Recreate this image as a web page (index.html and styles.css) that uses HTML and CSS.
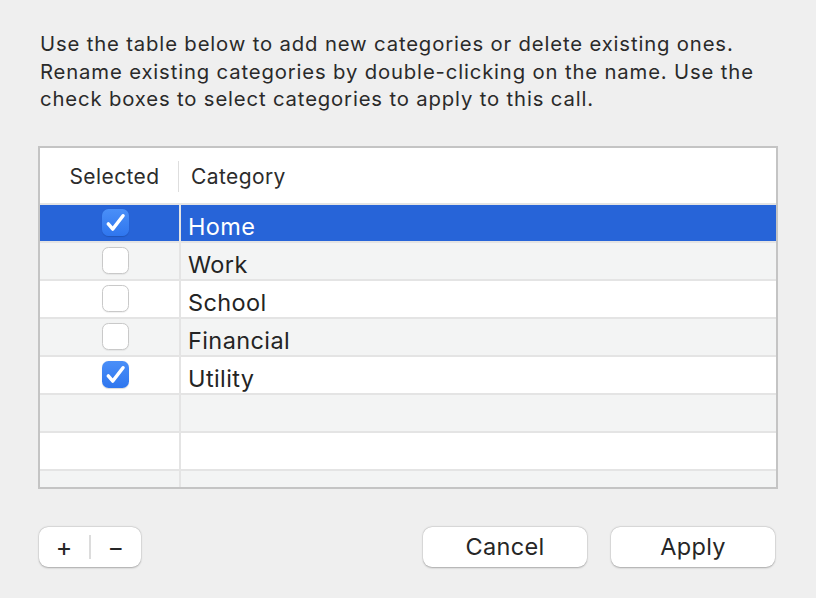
FILE: index.html
```html
<!DOCTYPE html>
<html>
<head>
<meta charset="utf-8">
<link rel="stylesheet" href="styles.css">
</head>
<body>
<div class="dialog">
  <p class="intro">Use the table below to add new categories or delete existing ones.<br>Rename existing categories by double-clicking on the name. Use the<br>check boxes to select categories to apply to this call.</p>

  <div class="table">
    <div class="head">
      <div class="hc sel">Selected</div>
      <div class="hc cat">Category</div>
    </div>
    <div class="body">
      <div class="row active">
        <div class="c sel"><span class="box on"><svg viewBox="0 0 28 28"><path d="M6.5 15.5 L11.2 20.8 L21.8 7" /></svg></span></div>
        <div class="c cat">Home</div>
      </div>
      <div class="row alt">
        <div class="c sel"><span class="box"></span></div>
        <div class="c cat">Work</div>
      </div>
      <div class="row">
        <div class="c sel"><span class="box"></span></div>
        <div class="c cat">School</div>
      </div>
      <div class="row alt">
        <div class="c sel"><span class="box"></span></div>
        <div class="c cat">Financial</div>
      </div>
      <div class="row">
        <div class="c sel"><span class="box on"><svg viewBox="0 0 28 28"><path d="M6.5 15.5 L11.2 20.8 L21.8 7" /></svg></span></div>
        <div class="c cat">Utility</div>
      </div>
      <div class="row alt"><div class="c sel"></div><div class="c cat"></div></div>
      <div class="row"><div class="c sel"></div><div class="c cat"></div></div>
      <div class="row alt"><div class="c sel"></div><div class="c cat"></div></div>
    </div>
  </div>

  <div class="footer">
    <div class="seg">
      <button class="segbtn" aria-label="Add">+</button>
      <span class="segdiv"></span>
      <button class="segbtn" aria-label="Remove">−</button>
    </div>
    <div class="actions">
      <button class="btn">Cancel</button>
      <button class="btn">Apply</button>
    </div>
  </div>
</div>
</body>
</html>
```

FILE: styles.css
```css
html, body {
  margin: 0;
  padding: 0;
}
body {
  width: 816px;
  height: 598px;
  background: #efefef;
  font-family: Inter, "Noto Sans", "Liberation Sans", sans-serif;
  color: #262626;
  overflow: hidden;
}
.dialog {
  padding: 30px 38px 0 38px;
}
.intro {
  margin: 0 0 0 2px;
  font-size: 20.3px;
  line-height: 27.5px;
  color: #2a2a2a;
  letter-spacing: 0.85px;
  white-space: nowrap;
}
.table {
  margin-top: 33px;
  width: 736px;
  height: 339px;
  border: 2px solid #c4c4c4;
  background: #ffffff;
  overflow: hidden;
}
.head {
  display: flex;
  height: 55px;
  border-bottom: 2px solid #e4e4e4;
  background: #fff;
}
.hc {
  font-size: 21px;
  letter-spacing: 0.4px;
  color: #2c2c2c;
  display: flex;
  align-items: center;
  padding-top: 2px;
}
.hc.sel {
  width: 139px;
  justify-content: center;
  padding-left: 10px;
  box-sizing: border-box;
  position: relative;
}
.hc.sel::after {
  content: "";
  position: absolute;
  right: 0;
  top: 13px;
  height: 31px;
  width: 1.5px;
  background: #dedede;
}
.hc.cat {
  padding-left: 12px;
}
.row {
  display: flex;
  height: 36px;
  border-bottom: 2px solid #e4e4e4;
  background: #ffffff;
}
.row.alt {
  background: #f3f4f4;
}
.row.active {
  background: #2764d8;
  color: #ffffff;
}
.c {
  display: flex;
  align-items: center;
  font-size: 23.5px;
  letter-spacing: 0.4px;
  color: #242424;
}
.row.active .c {
  color: #ffffff;
}
.c.sel {
  border-right: 2px solid #e4e4e4;
  justify-content: center;
  padding-left: 11px;
  box-sizing: border-box;
  width: 141px;
}
.c.cat {
  padding-left: 7px;
  padding-top: 7px;
}
.box {
  width: 27px;
  height: 27px;
  border-radius: 6.5px;
  box-sizing: border-box;
  background: #ffffff;
  border: 1px solid #c9c9c9;
  box-shadow: 0 0.5px 1px rgba(0,0,0,0.06);
  display: block;
}
.box.on {
  border: none;
  background: linear-gradient(#4a8ff8, #2f76ee);
  box-shadow: 0 0.5px 1px rgba(0,0,0,0.15);
}
.box svg {
  width: 27px;
  height: 27px;
  display: block;
}
.box svg path {
  fill: none;
  stroke: #ffffff;
  stroke-width: 3.6;
  stroke-linecap: round;
  stroke-linejoin: round;
}
.footer {
  display: flex;
  justify-content: space-between;
  align-items: center;
  margin-top: 38px;
  padding: 0 3px 0 1px;
}
.seg {
  display: flex;
  align-items: center;
  width: 102px;
  height: 40px;
  background: #ffffff;
  border-radius: 9px;
  box-shadow: 0 0.5px 2px rgba(0,0,0,0.28), 0 0 0 0.5px rgba(0,0,0,0.06);
}
.segbtn {
  flex: 1;
  height: 40px;
  border: none;
  background: transparent;
  font-family: Inter, "Noto Sans", sans-serif;
  font-size: 25px;
  color: #262626;
  padding: 0;
  line-height: 40px;
}
.segdiv {
  width: 1.5px;
  height: 24px;
  background: #dcdcdc;
}
.actions {
  display: flex;
  gap: 24px;
}
.btn {
  width: 164px;
  height: 40px;
  border: none;
  border-radius: 9px;
  background: #ffffff;
  box-shadow: 0 0.5px 2px rgba(0,0,0,0.28), 0 0 0 0.5px rgba(0,0,0,0.06);
  font-family: Inter, "Noto Sans", sans-serif;
  font-size: 23.5px;
  letter-spacing: 0.3px;
  color: #262626;
  padding: 0;
}
```
